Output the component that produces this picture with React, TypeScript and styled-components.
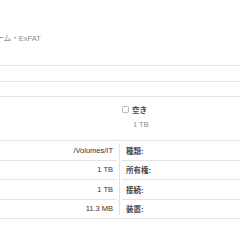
import styled, { createGlobalStyle } from 'styled-components'

const GlobalStyle = createGlobalStyle`
  body {
    margin: 0;
    background: #ffffff;
    overflow: hidden;
  }
`

const Page = styled.div`
  width: 240px;
  height: 240px;
  overflow: hidden;
  font-family: 'Liberation Sans', 'Noto Sans CJK JP', sans-serif;
  font-size: 7.5px;
  color: #333333;
`
const Header = styled.div`
  height: 65px;
  display: flex;
  align-items: flex-start;
  overflow: hidden;
  border-bottom: 1px solid #e6e6e6;
`
const Subtitle = styled.div`
  margin-top: 32px;
  margin-left: -56px;
  color: #8c8c8c;
  white-space: nowrap;
`
const UsageBar = styled.div`
  margin: 15px -10px 0;
  height: 14px;
  border: 1px solid #e3e3e3;
  border-radius: 4px;
`
const Legend = styled.div`
  height: 43px;
  padding-left: 122px;
  padding-top: 7px;
  box-sizing: border-box;
`
const LegendTitle = styled.div`
  display: flex;
  align-items: center;
  gap: 3px;
  font-weight: bold;
  color: #444444;
`
const Swatch = styled.span`
  width: 5px;
  height: 5px;
  border: 1px solid #b8b8b8;
  border-radius: 1.5px;
`
const LegendValue = styled.div`
  margin-top: 5px;
  padding-left: 11px;
  color: #8c8c8c;
`
const InfoTable = styled.div`
  display: grid;
  grid-template-columns: 117px 1px 1fr;
  column-gap: 2px;
  border-top: 1px solid #e3e3e3;
  border-bottom: 1px solid #e3e3e3;
`
const Column = styled.div`
  display: flex;
  flex-direction: column;
`
const Divider = styled.div`
  background: #e3e3e3;
  margin: 2px 0 3px;
`
const Row = styled.div<{ $align: 'left' | 'right' }>`
  height: 18.5px;
  display: flex;
  align-items: center;
  justify-content: ${(p) => (p.$align === 'right' ? 'flex-end' : 'flex-start')};
  padding: ${(p) => (p.$align === 'right' ? '0 4px 0 0' : '0 0 0 4px')};
  border-bottom: 1px solid #e3e3e3;
  white-space: nowrap;

  &:last-child {
    border-bottom: none;
  }
`
const Label = styled.span`
  font-weight: bold;
  color: #444444;
`

const values = ['/Volumes/IT', '1 TB', '1 TB', '11.3 MB']
const labels = ['種類:', '所有権:', '接続:', '装置:']

function App() {
  return (
    <Page>
      <GlobalStyle />
      <Header>
        <Subtitle>外部物理ボリューム・ExFAT</Subtitle>
      </Header>
      <UsageBar />
      <Legend>
        <LegendTitle>
          <Swatch />
          空き
        </LegendTitle>
        <LegendValue>1 TB</LegendValue>
      </Legend>
      <InfoTable>
        <Column>
          {values.map((v, i) => (
            <Row key={i} $align="right">
              {v}
            </Row>
          ))}
        </Column>
        <Divider />
        <Column>
          {labels.map((l) => (
            <Row key={l} $align="left">
              <Label>{l}</Label>
            </Row>
          ))}
        </Column>
      </InfoTable>
    </Page>
  )
}

export default App
